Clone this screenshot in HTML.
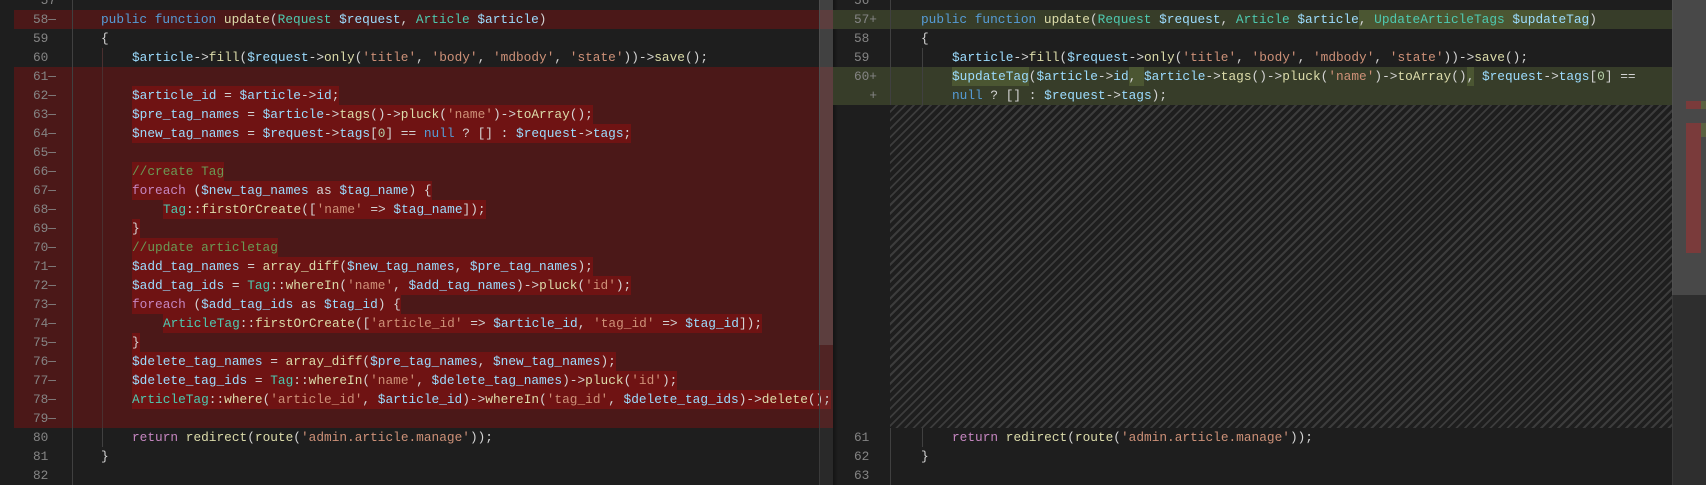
<!DOCTYPE html>
<html><head><meta charset="utf-8"><style>
*{margin:0;padding:0;box-sizing:border-box}
body{width:1706px;height:485px;background:#1e1e1e;overflow:hidden;position:relative;font-family:"Liberation Mono",monospace;font-size:12.8px;color:#d4d4d4}
.row{position:absolute;height:19px;line-height:19px;white-space:pre}
.bg{position:absolute;height:19px}
.num{position:absolute;height:19px;line-height:19px;color:#858585;text-align:right;width:40px}
.k{color:#569cd6}.f{color:#dcdcaa}.c{color:#4ec9b0}.v{color:#9cdcfe}.s{color:#ce9178}.m{color:#6a9955}.p{color:#c586c0}.n{color:#b5cea8}
.hl{background:#6f1313;display:inline-block;height:19px}
.hg{background:#4b5632;display:inline-block;height:19px}
.clipL{position:absolute;left:0;top:0;width:833px;height:485px;overflow:hidden}
.guide{position:absolute;width:1px;background:#404040}
</style></head><body>
<div class="clipL">
<div class="bg" style="left:14px;top:10px;width:820px;background:#4b1818"></div>
<div class="bg" style="left:14px;top:67px;width:820px;height:361px;background:#4b1818"></div>
<div class="guide" style="left:72px;top:0;height:485px"></div>
<div class="guide" style="left:102px;top:48px;height:380px;background:#4a3030"></div>
<div class="guide" style="left:133px;top:181px;height:19px;background:#5a3030"></div>
<div class="guide" style="left:133px;top:295px;height:19px;background:#5a3030"></div>
<div class="guide" style="left:102px;top:428px;height:19px"></div>

<div class="num" style="left:16px;top:-9px">57</div>
<div class="num" style="left:16px;top:10px">58—</div>
<div class="num" style="left:16px;top:29px">59&nbsp;</div>
<div class="num" style="left:16px;top:48px">60&nbsp;</div>
<div class="num" style="left:16px;top:67px">61—</div>
<div class="num" style="left:16px;top:86px">62—</div>
<div class="num" style="left:16px;top:105px">63—</div>
<div class="num" style="left:16px;top:124px">64—</div>
<div class="num" style="left:16px;top:143px">65—</div>
<div class="num" style="left:16px;top:162px">66—</div>
<div class="num" style="left:16px;top:181px">67—</div>
<div class="num" style="left:16px;top:200px">68—</div>
<div class="num" style="left:16px;top:219px">69—</div>
<div class="num" style="left:16px;top:238px">70—</div>
<div class="num" style="left:16px;top:257px">71—</div>
<div class="num" style="left:16px;top:276px">72—</div>
<div class="num" style="left:16px;top:295px">73—</div>
<div class="num" style="left:16px;top:314px">74—</div>
<div class="num" style="left:16px;top:333px">75—</div>
<div class="num" style="left:16px;top:352px">76—</div>
<div class="num" style="left:16px;top:371px">77—</div>
<div class="num" style="left:16px;top:390px">78—</div>
<div class="num" style="left:16px;top:409px">79—</div>
<div class="num" style="left:16px;top:428px">80&nbsp;</div>
<div class="num" style="left:16px;top:447px">81&nbsp;</div>
<div class="num" style="left:16px;top:466px">82&nbsp;</div>

<div class="row" style="left:101px;top:10px"><span class="k">public function</span> <span class="f">update</span>(<span class="c">Request</span> <span class="v">$request</span>, <span class="c">Article</span> <span class="v">$article</span>)</div>
<div class="row" style="left:101px;top:29px">{</div>
<div class="row" style="left:132px;top:48px"><span class="v">$article</span>-&gt;<span class="f">fill</span>(<span class="v">$request</span>-&gt;<span class="f">only</span>(<span class="s">'title'</span>, <span class="s">'body'</span>, <span class="s">'mdbody'</span>, <span class="s">'state'</span>))-&gt;<span class="f">save</span>();</div>
<div class="row" style="left:132px;top:86px"><span class="hl"><span class="v">$article_id</span> = <span class="v">$article</span>-&gt;<span class="v">id</span>;</span></div>
<div class="row" style="left:132px;top:105px"><span class="hl"><span class="v">$pre_tag_names</span> = <span class="v">$article</span>-&gt;<span class="f">tags</span>()-&gt;<span class="f">pluck</span>(<span class="s">'name'</span>)-&gt;<span class="f">toArray</span>();</span></div>
<div class="row" style="left:132px;top:124px"><span class="hl"><span class="v">$new_tag_names</span> = <span class="v">$request</span>-&gt;<span class="v">tags</span>[<span class="n">0</span>] == <span class="k">null</span> ? [] : <span class="v">$request</span>-&gt;<span class="v">tags</span>;</span></div>
<div class="row" style="left:132px;top:162px"><span class="hl"><span class="m">//create Tag</span></span></div>
<div class="row" style="left:132px;top:181px"><span class="hl"><span class="p">foreach</span> (<span class="v">$new_tag_names</span> as <span class="v">$tag_name</span>) {</span></div>
<div class="row" style="left:163px;top:200px"><span class="hl"><span class="c">Tag</span>::<span class="f">firstOrCreate</span>([<span class="s">'name'</span> =&gt; <span class="v">$tag_name</span>]);</span></div>
<div class="row" style="left:132px;top:219px"><span class="hl">}</span></div>
<div class="row" style="left:132px;top:238px"><span class="hl"><span class="m">//update articletag</span></span></div>
<div class="row" style="left:132px;top:257px"><span class="hl"><span class="v">$add_tag_names</span> = <span class="f">array_diff</span>(<span class="v">$new_tag_names</span>, <span class="v">$pre_tag_names</span>);</span></div>
<div class="row" style="left:132px;top:276px"><span class="hl"><span class="v">$add_tag_ids</span> = <span class="c">Tag</span>::<span class="f">whereIn</span>(<span class="s">'name'</span>, <span class="v">$add_tag_names</span>)-&gt;<span class="f">pluck</span>(<span class="s">'id'</span>);</span></div>
<div class="row" style="left:132px;top:295px"><span class="hl"><span class="p">foreach</span> (<span class="v">$add_tag_ids</span> as <span class="v">$tag_id</span>) {</span></div>
<div class="row" style="left:163px;top:314px"><span class="hl"><span class="c">ArticleTag</span>::<span class="f">firstOrCreate</span>([<span class="s">'article_id'</span> =&gt; <span class="v">$article_id</span>, <span class="s">'tag_id'</span> =&gt; <span class="v">$tag_id</span>]);</span></div>
<div class="row" style="left:132px;top:333px"><span class="hl">}</span></div>
<div class="row" style="left:132px;top:352px"><span class="hl"><span class="v">$delete_tag_names</span> = <span class="f">array_diff</span>(<span class="v">$pre_tag_names</span>, <span class="v">$new_tag_names</span>);</span></div>
<div class="row" style="left:132px;top:371px"><span class="hl"><span class="v">$delete_tag_ids</span> = <span class="c">Tag</span>::<span class="f">whereIn</span>(<span class="s">'name'</span>, <span class="v">$delete_tag_names</span>)-&gt;<span class="f">pluck</span>(<span class="s">'id'</span>);</span></div>
<div class="row" style="left:132px;top:390px"><span class="hl"><span class="c">ArticleTag</span>::<span class="f">where</span>(<span class="s">'article_id'</span>, <span class="v">$article_id</span>)-&gt;<span class="f">whereIn</span>(<span class="s">'tag_id'</span>, <span class="v">$delete_tag_ids</span>)-&gt;<span class="f">delete</span>();</span></div>
<div class="row" style="left:132px;top:428px"><span class="p">return</span> <span class="f">redirect</span>(<span class="f">route</span>(<span class="s">'admin.article.manage'</span>));</div>
<div class="row" style="left:101px;top:447px">}</div>
</div>
<div style="position:absolute;left:819px;top:0;width:14px;height:485px;background:rgba(121,121,121,0.12);border-left:1px solid #3a3a3a"></div>
<div style="position:absolute;left:819px;top:0;width:14px;height:345px;background:rgba(121,121,121,0.3)"></div>
<div style="position:absolute;left:833px;top:0;width:5px;height:485px;background:linear-gradient(90deg,#141414,#1e1e1e)"></div>

<div class="bg" style="left:833px;top:10px;width:853px;background:#373d29"></div>
<div class="bg" style="left:833px;top:67px;width:853px;height:38px;background:#373d29"></div>
<div style="position:absolute;left:890px;top:105px;width:782px;height:323px;background:repeating-linear-gradient(135deg,#1e1e1e 0px,#1e1e1e 4px,#3c3c3c 4px,#3c3c3c 6px)"></div>
<div class="guide" style="left:890px;top:0;height:105px"></div>
<div class="guide" style="left:890px;top:428px;height:57px"></div>
<div class="guide" style="left:922px;top:48px;height:57px"></div>
<div class="guide" style="left:922px;top:428px;height:19px"></div>

<div class="num" style="left:837px;top:-9px">56&nbsp;</div>
<div class="num" style="left:837px;top:10px">57+</div>
<div class="num" style="left:837px;top:29px">58&nbsp;</div>
<div class="num" style="left:837px;top:48px">59&nbsp;</div>
<div class="num" style="left:837px;top:67px">60+</div>
<div class="num" style="left:837px;top:86px">+</div>
<div class="num" style="left:837px;top:428px">61&nbsp;</div>
<div class="num" style="left:837px;top:447px">62&nbsp;</div>
<div class="num" style="left:837px;top:466px">63&nbsp;</div>

<div class="row" style="left:921px;top:10px"><span class="k">public function</span> <span class="f">update</span>(<span class="c">Request</span> <span class="v">$request</span>, <span class="c">Article</span> <span class="v">$article</span><span class="hg">, <span class="c">UpdateArticleTags</span> <span class="v">$updateTag</span></span>)</div>
<div class="row" style="left:921px;top:29px">{</div>
<div class="row" style="left:952px;top:48px"><span class="v">$article</span>-&gt;<span class="f">fill</span>(<span class="v">$request</span>-&gt;<span class="f">only</span>(<span class="s">'title'</span>, <span class="s">'body'</span>, <span class="s">'mdbody'</span>, <span class="s">'state'</span>))-&gt;<span class="f">save</span>();</div>
<div class="row" style="left:952px;top:67px"><span class="hg"><span class="v">$updateTag</span></span>(<span class="v">$article</span>-&gt;<span class="v">id</span><span class="hg">, </span><span class="v">$article</span>-&gt;<span class="f">tags</span>()-&gt;<span class="f">pluck</span>(<span class="s">'name'</span>)-&gt;<span class="f">toArray</span>()<span class="hg">,</span> <span class="v">$request</span>-&gt;<span class="v">tags</span>[<span class="n">0</span>] ==</div>
<div class="row" style="left:952px;top:86px"><span class="k">null</span> ? [] : <span class="v">$request</span>-&gt;<span class="v">tags</span>);</div>
<div class="row" style="left:952px;top:428px"><span class="p">return</span> <span class="f">redirect</span>(<span class="f">route</span>(<span class="s">'admin.article.manage'</span>));</div>
<div class="row" style="left:921px;top:447px">}</div>

<div style="position:absolute;left:1672px;top:0;width:34px;height:485px;background:#2e2e2e;border-left:1px solid #3a3a3a"></div>
<div style="position:absolute;left:1672px;top:0;width:34px;height:295px;background:rgba(121,121,121,0.35)"></div>
<div style="position:absolute;left:1686px;top:101px;width:15px;height:8px;background:#7a3b3b"></div>
<div style="position:absolute;left:1686px;top:123px;width:15px;height:130px;background:#7a3b3b"></div>
<div style="position:absolute;left:1701px;top:101px;width:5px;height:8px;background:#5a6040"></div>
<div style="position:absolute;left:1701px;top:123px;width:5px;height:14px;background:#5a6040"></div>
</body></html>
